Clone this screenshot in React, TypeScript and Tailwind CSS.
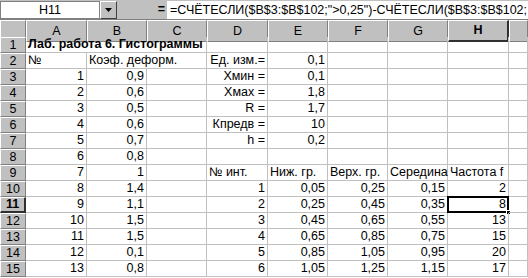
type Cell = { v: string; al?: "l" | "r"; b?: boolean };

const colNames = ["A", "B", "C", "D", "E", "F", "G", "H", ""];

const L = (v: string, b = false): Cell => ({ v, al: "l", b });
const R = (v: string): Cell => ({ v, al: "r" });
const E: Cell = { v: "" };

const rows: Cell[][] = [
  [L("Лаб. работа 6. Гистограммы", true), E, E, E, E, E, E, E, E],
  [L("№"), L("Коэф. деформ."), E, R("Ед. изм.="), R("0,1"), E, E, E, E],
  [R("1"), R("0,9"), E, R("Xмин ="), R("0,1"), E, E, E, E],
  [R("2"), R("0,6"), E, R("Xмах ="), R("1,8"), E, E, E, E],
  [R("3"), R("0,5"), E, R("R ="), R("1,7"), E, E, E, E],
  [R("4"), R("0,6"), E, R("Кпредв ="), R("10"), E, E, E, E],
  [R("5"), R("0,7"), E, R("h ="), R("0,2"), E, E, E, E],
  [R("6"), R("0,8"), E, E, E, E, E, E, E],
  [R("7"), R("1"), E, L("№ инт."), L("Ниж. гр."), L("Верх. гр."), L("Середина"), L("Частота f"), E],
  [R("8"), R("1,4"), E, R("1"), R("0,05"), R("0,25"), R("0,15"), R("2"), E],
  [R("9"), R("1,1"), E, R("2"), R("0,25"), R("0,45"), R("0,35"), R("8"), E],
  [R("10"), R("1,5"), E, R("3"), R("0,45"), R("0,65"), R("0,55"), R("13"), E],
  [R("11"), R("1,5"), E, R("4"), R("0,65"), R("0,85"), R("0,75"), R("15"), E],
  [R("12"), R("0,1"), E, R("5"), R("0,85"), R("1,05"), R("0,95"), R("20"), E],
  [R("13"), R("0,8"), E, R("6"), R("1,05"), R("1,25"), R("1,15"), R("17"), E],
];

// cells whose right gridline is covered by overflowing text: "row-col"
const noRight = new Set(["0-0", "0-1", "1-1"]);

const gridCols =
  "grid grid-cols-[26px_61px_60px_60px_61px_60px_60px_60px_61px_1fr]";

export default function App() {
  return (
    <div
      className="w-[528px] h-[278px] overflow-hidden bg-white text-[12.5px] text-black"
      style={{ fontFamily: "'Liberation Sans', Arial, sans-serif" }}
    >
      {/* Formula bar */}
      <div className="flex h-[20px] bg-[#c0c0c0] border-b border-[#808080]">
        <div className="w-[100px] h-[18px] mt-[1px] bg-white border border-[#808080] flex items-center justify-center">
          H11
        </div>
        <div className="w-[17px] h-[18px] mt-[1px] bg-[#c0c0c0] border-t border-l border-white border-b border-r border-b-[#404040] border-r-[#404040] flex items-center justify-center">
          <svg width="7" height="4" viewBox="0 0 7 4">
            <path d="M0 0h7L3.5 4z" fill="#000" />
          </svg>
        </div>
        <div className="w-[50px] flex items-center justify-end pr-[2px] font-bold">=</div>
        <div className="flex-1 h-[18px] mt-[1px] bg-white flex items-center pl-[3px] whitespace-nowrap overflow-hidden">
          =СЧЁТЕСЛИ($B$3:$B$102;"&gt;0,25")-СЧЁТЕСЛИ($B$3:$B$102;
        </div>
      </div>

      {/* Column headers */}
      <div className={`${gridCols} h-[17px]`}>
        <div className="bg-[#c0c0c0] border-t border-l border-white border-b border-r border-b-[#808080] border-r-[#808080]" />
        {colNames.map((c, i) =>
          c === "H" ? (
            <div
              key={i}
              className="bg-[#c0c0c0] border-t border-l border-white border-b-2 border-r-2 border-b-[#303030] border-r-[#303030] flex items-center justify-center font-bold"
            >
              {c}
            </div>
          ) : (
            <div
              key={i}
              className="bg-[#c0c0c0] border-t border-l border-white border-b border-r border-b-[#808080] border-r-[#808080] flex items-center justify-center"
            >
              {c}
            </div>
          )
        )}
      </div>

      {/* Rows */}
      {rows.map((row, r) => (
        <div key={r} className={`${gridCols} h-[16px]`}>
          {r === 10 ? (
            <div className="bg-[#c0c0c0] border-t border-l border-white border-b-2 border-r-2 border-b-[#303030] border-r-[#303030] flex items-center justify-center font-bold leading-none">
              {r + 1}
            </div>
          ) : (
            <div className="bg-[#c0c0c0] border-t border-l border-white border-b border-r border-b-[#808080] border-r-[#808080] flex items-center justify-center leading-none">
              {r + 1}
            </div>
          )}
          {row.map((cell, c) => {
            const hideR = noRight.has(`${r}-${c}`);
            const active = r === 10 && c === 7;
            return (
              <div
                key={c}
                className={`relative border-b border-[#c0c0c0] ${
                  hideR ? "border-r-0" : "border-r"
                } flex items-center leading-none whitespace-nowrap ${
                  cell.al === "r" ? "justify-end pr-[2px]" : "pl-[2px]"
                } ${cell.b ? "font-bold" : ""}`}
              >
                <span className="relative z-10">{cell.v}</span>
                {active && (
                  <>
                    <div className="absolute -left-[1px] -top-[1px] right-[-1px] bottom-[-1px] border-2 border-black" />
                    <div className="absolute right-[-3px] bottom-[-3px] w-[5px] h-[5px] bg-black border border-white" />
                  </>
                )}
              </div>
            );
          })}
        </div>
      ))}
    </div>
  );
}
